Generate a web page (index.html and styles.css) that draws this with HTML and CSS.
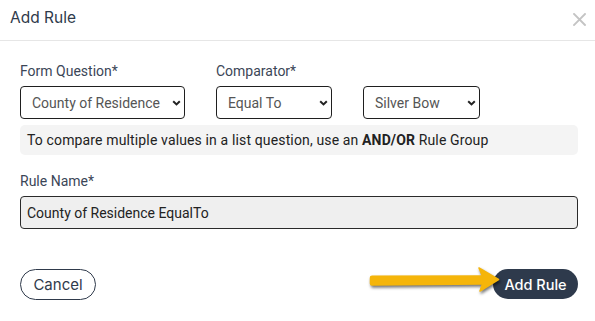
FILE: index.html
```html
<!DOCTYPE html>
<html lang="en">
<head>
<meta charset="utf-8">
<title>Add Rule</title>
<link rel="stylesheet" href="styles.css">
</head>
<body>
<div class="modal">
  <div class="modal-header">
    <h1 class="modal-title">Add Rule</h1>
    <button class="close" aria-label="Close">
      <svg width="13" height="13" viewBox="0 0 13 13"><path d="M1 1L12 12M12 1L1 12" stroke="#c4c4c4" stroke-width="1.9" stroke-linecap="square"/></svg>
    </button>
  </div>
  <div class="modal-body">
    <div class="row">
      <div class="field">
        <label class="label">Form Question*</label>
        <div class="select w1"><span>County of Residence</span><svg class="chev" width="9" height="6" viewBox="0 0 9 6"><path d="M1.2 1.2L4.5 4.4L7.8 1.2" fill="none" stroke="#222" stroke-width="2"/></svg></div>
      </div>
      <div class="field">
        <label class="label">Comparator*</label>
        <div class="select w2"><span>Equal To</span><svg class="chev" width="9" height="6" viewBox="0 0 9 6"><path d="M1.2 1.2L4.5 4.4L7.8 1.2" fill="none" stroke="#222" stroke-width="2"/></svg></div>
      </div>
      <div class="field">
        <div class="select w3"><span>Silver Bow</span><svg class="chev" width="9" height="6" viewBox="0 0 9 6"><path d="M1.2 1.2L4.5 4.4L7.8 1.2" fill="none" stroke="#222" stroke-width="2"/></svg></div>
      </div>
    </div>
    <div class="info">To compare multiple values in a list question, use an <b>AND/OR</b> Rule Group</div>
    <label class="label rule-label">Rule Name*</label>
    <div class="input">County of Residence EqualTo</div>
  </div>
  <div class="modal-footer">
    <button class="btn btn-outline">Cancel</button>
    <button class="btn btn-primary">Add Rule</button>
    <svg class="arrow" width="140" height="36" viewBox="0 0 140 36">
      <path d="M5 13.8 L116 13.4 L116 18.6 L5 19.6 Z" fill="#f5b50a" stroke="#f5b50a" stroke-width="4.5" stroke-linejoin="round"/>
      <path d="M112 4 L131.5 15.5 L113 27 L117 15.8 Z" fill="#f5b50a" stroke="#f5b50a" stroke-width="1.5" stroke-linejoin="round"/>
    </svg>
  </div>
</div>
</body>
</html>
```

FILE: styles.css
```css
* { box-sizing: border-box; }
html, body { margin: 0; padding: 0; background: #fff; }
body { width: 595px; height: 321px; overflow: hidden; font-family: Roboto, "Liberation Sans", sans-serif; }

.modal { width: 595px; position: relative; }

.modal-header {
  height: 41px;
  border-bottom: 1px solid #e6e6e6;
  display: flex;
  justify-content: space-between;
  align-items: flex-start;
  padding: 8px 9px 0 10px;
}
.modal-title {
  margin: 0;
  font-family: Inter, "Open Sans", sans-serif;
  font-weight: 400;
  font-size: 15.5px;
  line-height: 20px;
  color: #2f3a4b;
}
.close {
  margin-top: 5px;
  padding: 0;
  border: 0;
  background: none;
  width: 13px;
  height: 13px;
  display: flex;
}

.modal-body { padding: 20px 17px 0 20px; }

.row { display: flex; gap: 31px; align-items: flex-end; }
.field { display: flex; flex-direction: column; }

.label {
  display: block;
  font-size: 14px;
  line-height: 20px;
  color: #3b4657;
  margin-bottom: 5px;
}

.select {
  height: 33px;
  border: 1px solid #1f1f1f;
  border-radius: 4px;
  display: flex;
  align-items: center;
  justify-content: space-between;
  padding: 0 3px 0 11px;
  font-size: 14px;
  color: #555;
  background: #fff;
}
.select .chev { flex: none; margin-top: 1px; }
.w1 { width: 165px; }
.w2 { width: 116px; }
.w3 { width: 117px; }

.info {
  margin-top: 6px;
  height: 30px;
  background: #f4f4f4;
  border-radius: 5px;
  padding: 0 7px;
  display: flex;
  align-items: center;
  font-size: 14px;
  letter-spacing: 0.14px;
  color: #222;
  white-space: pre;
}
.info b { font-weight: 700; }

.rule-label { margin-top: 16px; }

.input {
  height: 33px;
  border: 1px solid #2a2a2a;
  border-radius: 4px;
  background: #efefef;
  display: flex;
  align-items: center;
  padding: 0 6px;
  font-size: 14px;
  color: #222;
}

.modal-footer {
  position: relative;
  display: flex;
  justify-content: space-between;
  align-items: flex-start;
  padding: 40px 17px 0 20px;
}
.btn {
  font-family: Inter, "Open Sans", sans-serif;
  font-size: 15px;
  border-radius: 16px;
  cursor: pointer;
}
.btn-outline {
  width: 76px;
  height: 31px;
  border: 1px solid #2f3a4b;
  background: #fff;
  color: #2f3a4b;
  padding: 0;
}
.btn-primary {
  width: 85px;
  height: 30px;
  border: 0;
  background: #2e3a4c;
  color: #fff;
  font-weight: 500;
  font-size: 14.5px;
  padding: 0;
}
.arrow {
  position: absolute;
  left: 367px;
  top: 35px;
  filter: drop-shadow(1.5px 2.5px 1.5px rgba(0,0,0,0.55));
}
```
